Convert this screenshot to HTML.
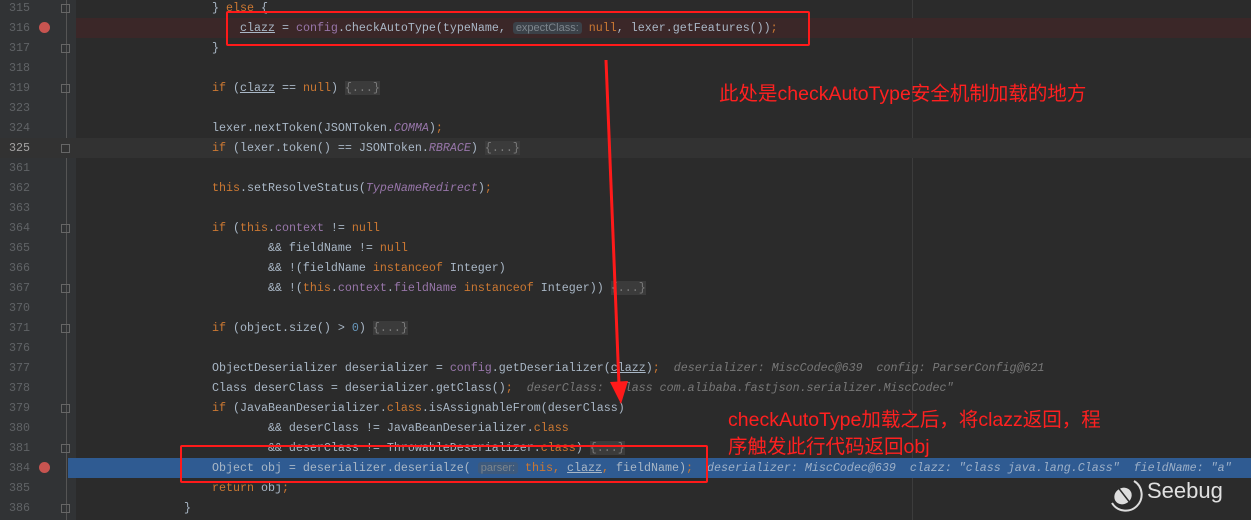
<!DOCTYPE html>
<html><head><meta charset="utf-8"><style>
body{margin:0;width:1251px;height:520px;background:#2b2b2b;overflow:hidden;position:relative;font-family:"Liberation Mono",monospace;font-size:11.67px;color:#a9b7c6}
.gut{position:absolute;left:0;top:0;width:76px;height:520px;background:#313335}
.row{position:absolute;left:0;width:1251px;height:20px;line-height:20px;white-space:pre}
.num{position:absolute;left:0;width:30px;text-align:right;color:#606366}
.code{position:absolute;left:184px}
.k{color:#cc7832}.f{color:#9876aa}.i{color:#9876aa;font-style:italic}.u{text-decoration:underline}
.h{color:#787878;font-style:italic}
.fold{color:#7a7a7a;background:#3b3b3b}
.hint{background:#3b4148;color:#7d858c;border-radius:3px;padding:0 3px;font-family:"Liberation Sans",sans-serif;font-size:11px}
.fm{position:absolute;left:61px;width:7px;height:7px;border:1px solid #666;top:6px}
.bp{position:absolute;left:39px;top:4px;width:11px;height:11px;border-radius:50%;background:#c75450}
.ann{position:absolute;color:#ff2020;font-family:"Liberation Sans","Noto Sans CJK SC",sans-serif;font-size:19.5px;white-space:nowrap}
.box{position:absolute;border:2px solid #ff1a1a;border-radius:2px}
</style></head><body>
<div class="gut"></div>
<div style="position:absolute;left:66px;top:0;width:1px;height:520px;background:#555"></div>
<div style="position:absolute;left:912px;top:0;width:1px;height:520px;background:#3c3c3c"></div>
<div class="row" style="top:18px;left:76px;background:#3b2728;width:1175px"></div>
<div class="row" style="top:138px;left:0;background:#323232"></div>
<div class="row" style="top:458px;left:68px;background:#2f5b92;width:1183px"></div>

<div class="row" style="top:-2px"><span class="num">315</span><span class="fm"></span><span class="code">    } <span class="k">else</span> {</span></div>
<div class="row" style="top:18px"><span class="num">316</span><span class="bp"></span><span class="code">        <span class="u">clazz</span> = <span class="f">config</span>.checkAutoType(typeName, <span class="hint">expectClass:</span> <span class="k">null</span>, lexer.getFeatures())<span class="k">;</span></span></div>
<div class="row" style="top:38px"><span class="num">317</span><span class="fm"></span><span class="code">    }</span></div>
<div class="row" style="top:58px"><span class="num">318</span></div>
<div class="row" style="top:78px"><span class="num">319</span><span class="fm"></span><span class="code">    <span class="k">if</span> (<span class="u">clazz</span> == <span class="k">null</span>) <span class="fold">{...}</span></span></div>
<div class="row" style="top:98px"><span class="num">323</span></div>
<div class="row" style="top:118px"><span class="num">324</span><span class="code">    lexer.nextToken(JSONToken.<span class="i">COMMA</span>)<span class="k">;</span></span></div>
<div class="row" style="top:138px"><span class="num" style="color:#a4a3a3">325</span><span class="fm"></span><span class="code">    <span class="k">if</span> (lexer.token() == JSONToken.<span class="i">RBRACE</span>) <span class="fold">{...}</span></span></div>
<div class="row" style="top:158px"><span class="num">361</span></div>
<div class="row" style="top:178px"><span class="num">362</span><span class="code">    <span class="k">this</span>.setResolveStatus(<span class="i">TypeNameRedirect</span>)<span class="k">;</span></span></div>
<div class="row" style="top:198px"><span class="num">363</span></div>
<div class="row" style="top:218px"><span class="num">364</span><span class="fm"></span><span class="code">    <span class="k">if</span> (<span class="k">this</span>.<span class="f">context</span> != <span class="k">null</span></span></div>
<div class="row" style="top:238px"><span class="num">365</span><span class="code">            &amp;&amp; fieldName != <span class="k">null</span></span></div>
<div class="row" style="top:258px"><span class="num">366</span><span class="code">            &amp;&amp; !(fieldName <span class="k">instanceof</span> Integer)</span></div>
<div class="row" style="top:278px"><span class="num">367</span><span class="fm"></span><span class="code">            &amp;&amp; !(<span class="k">this</span>.<span class="f">context</span>.<span class="f">fieldName</span> <span class="k">instanceof</span> Integer)) <span class="fold">{...}</span></span></div>
<div class="row" style="top:298px"><span class="num">370</span></div>
<div class="row" style="top:318px"><span class="num">371</span><span class="fm"></span><span class="code">    <span class="k">if</span> (object.size() > <span style="color:#6897bb">0</span>) <span class="fold">{...}</span></span></div>
<div class="row" style="top:338px"><span class="num">376</span></div>
<div class="row" style="top:358px"><span class="num">377</span><span class="code">    ObjectDeserializer deserializer = <span class="f">config</span>.getDeserializer(<span class="u">clazz</span>)<span class="k">;</span>  <span class="h">deserializer: MiscCodec@639  config: ParserConfig@621</span></span></div>
<div class="row" style="top:378px"><span class="num">378</span><span class="code">    Class deserClass = deserializer.getClass()<span class="k">;</span>  <span class="h">deserClass: "class com.alibaba.fastjson.serializer.MiscCodec"</span></span></div>
<div class="row" style="top:398px"><span class="num">379</span><span class="fm"></span><span class="code">    <span class="k">if</span> (JavaBeanDeserializer.<span class="k">class</span>.isAssignableFrom(deserClass)</span></div>
<div class="row" style="top:418px"><span class="num">380</span><span class="code">            &amp;&amp; deserClass != JavaBeanDeserializer.<span class="k">class</span></span></div>
<div class="row" style="top:438px"><span class="num">381</span><span class="fm"></span><span class="code">            &amp;&amp; deserClass != ThrowableDeserializer.<span class="k">class</span>) <span class="fold">{...}</span></span></div>
<div class="row" style="top:458px"><span class="num">384</span><span class="bp"></span><span class="code">    Object obj = deserializer.deserialze( <span class="hint" style="background:#3d5a7d">parser:</span> <span class="k">this</span><span class="k">,</span> <span class="u">clazz</span><span class="k">,</span> fieldName)<span class="k">;</span>  <span class="h" style="color:#9db0c8">deserializer: MiscCodec@639  clazz: "class java.lang.Class"  fieldName: "a"</span></span></div>
<div class="row" style="top:478px"><span class="num">385</span><span class="code">    <span class="k">return</span> obj<span class="k">;</span></span></div>
<div class="row" style="top:498px"><span class="num">386</span><span class="fm"></span><span class="code">}</span></div>

<div class="box" style="left:226px;top:11px;width:580px;height:31px"></div>
<div class="box" style="left:180px;top:445px;width:524px;height:34px"></div>
<svg style="position:absolute;left:0;top:0" width="1251" height="520"><line x1="606" y1="60" x2="619" y2="385" stroke="#ff1a1a" stroke-width="3"/><polygon points="610,382 628,381 621,404" fill="#ff1a1a"/></svg>
<div class="ann" style="left:719px;top:77px">此处是checkAutoType安全机制加载的地方</div>
<div class="ann" style="left:728px;top:403px">checkAutoType加载之后，将clazz返回，程</div>
<div class="ann" style="left:728px;top:430px">序触发此行代码返回obj</div>

<svg style="position:absolute;left:1104px;top:473px" width="40" height="40"><path d="M30 8 A16 16 0 1 1 8 30" fill="none" stroke="#ddd" stroke-width="2"/><ellipse cx="19" cy="23" rx="9" ry="8" fill="#ddd" transform="rotate(-35 19 23)"/><line x1="13" y1="13" x2="27" y2="31" stroke="#2b2b2b" stroke-width="1.5"/></svg>
<div style="position:absolute;left:1147px;top:478px;color:#e0e0e0;font-family:'Liberation Sans',sans-serif;font-size:22px">Seebug</div>
</body></html>
